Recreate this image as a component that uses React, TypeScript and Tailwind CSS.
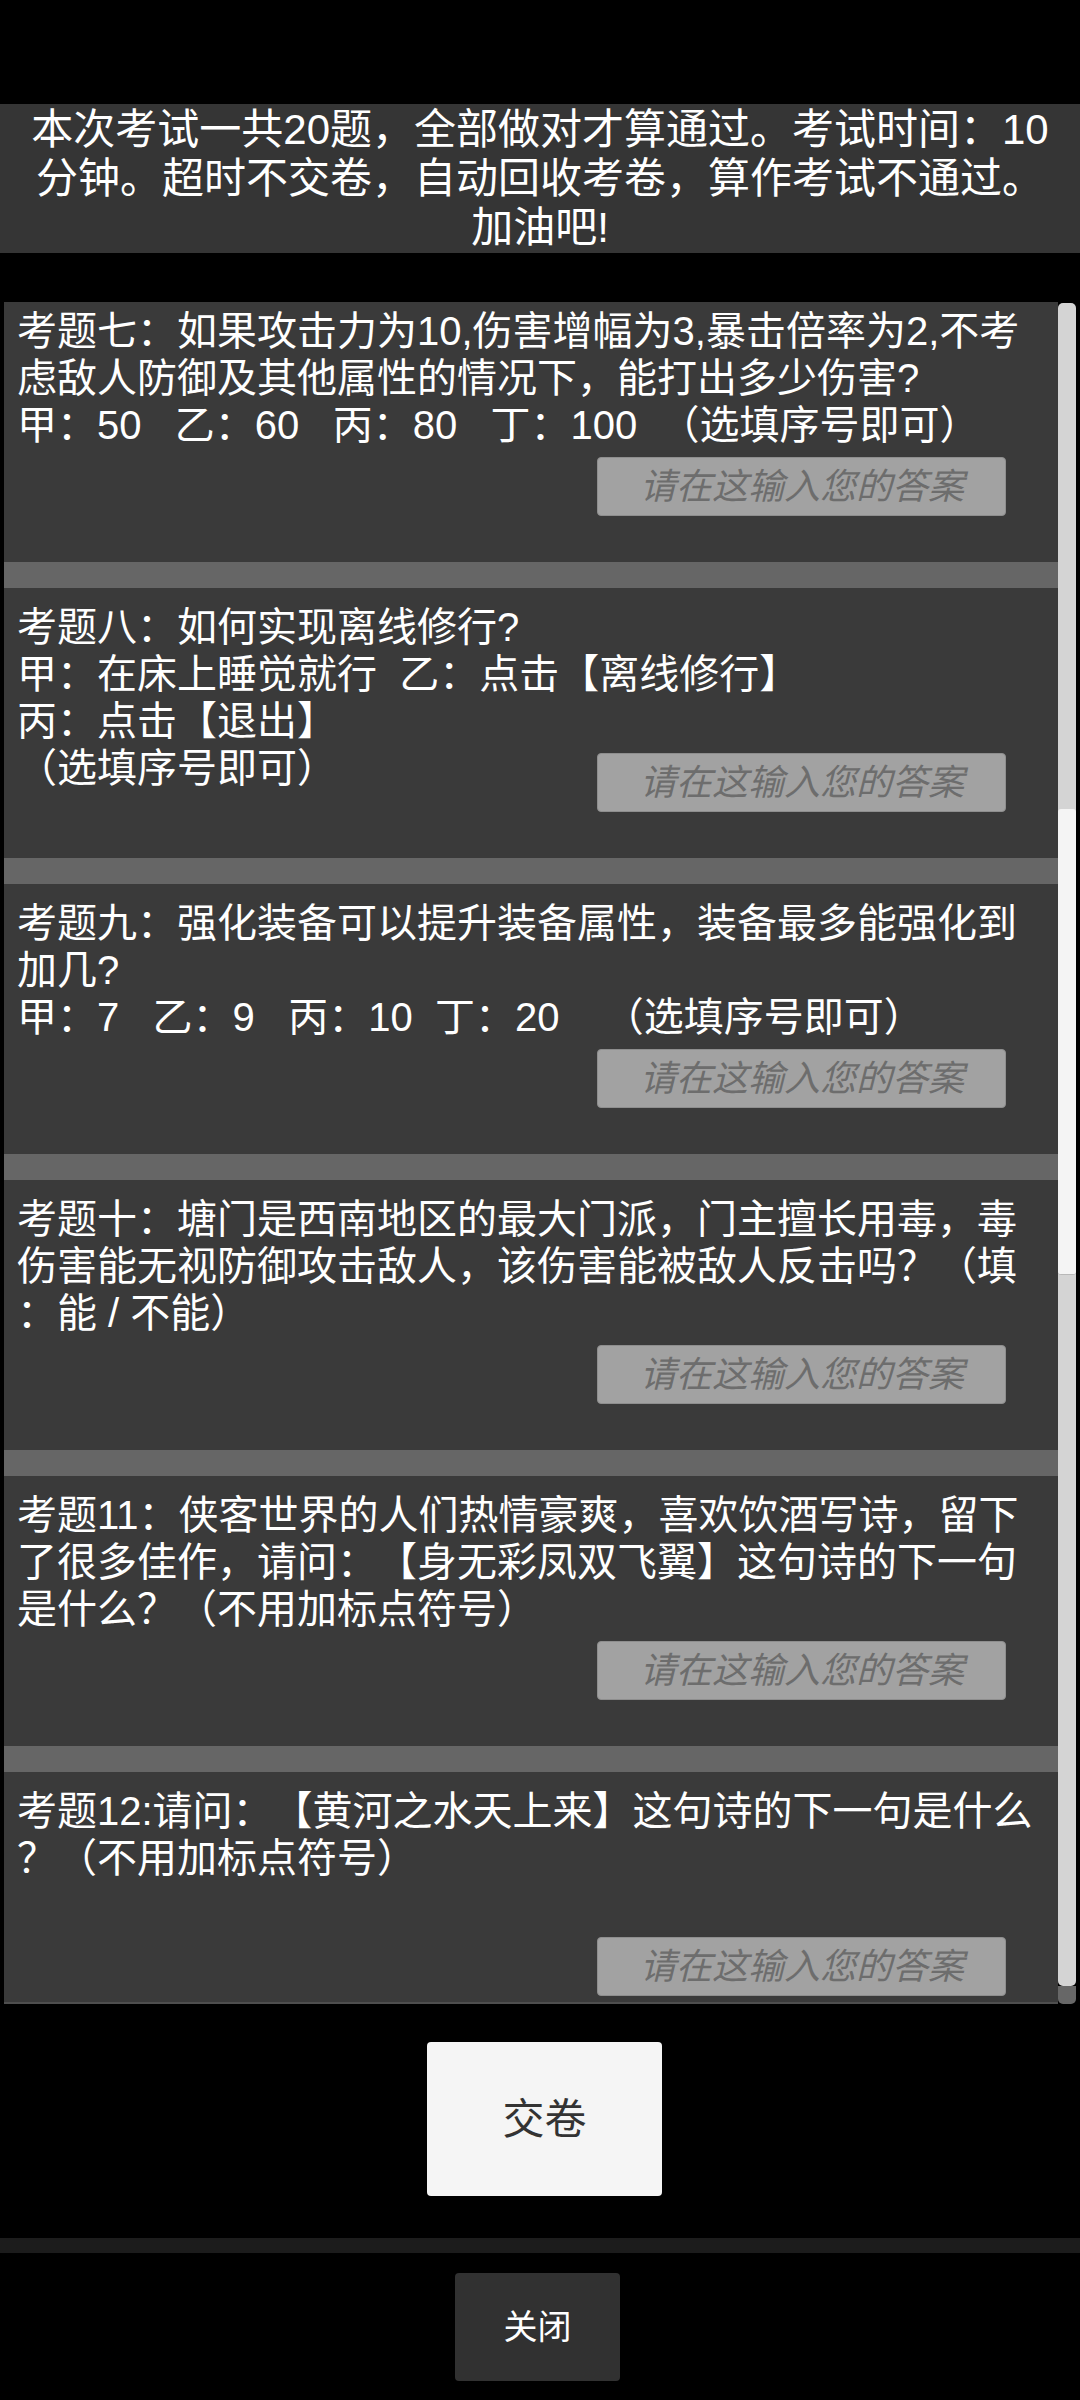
const questions: string[][] = [
  [
    "考题七：如果攻击力为10,伤害增幅为3,暴击倍率为2,不考",
    "虑敌人防御及其他属性的情况下，能打出多少伤害?",
    "甲：50   乙：60   丙：80   丁：100  （选填序号即可）",
  ],
  [
    "考题八：如何实现离线修行?",
    "甲：在床上睡觉就行  乙：点击【离线修行】",
    "丙：点击【退出】",
    "（选填序号即可）",
  ],
  [
    "考题九：强化装备可以提升装备属性，装备最多能强化到",
    "加几?",
    "甲：7   乙：9   丙：10  丁：20    （选填序号即可）",
  ],
  [
    "考题十：塘门是西南地区的最大门派，门主擅长用毒，毒",
    "伤害能无视防御攻击敌人，该伤害能被敌人反击吗？（填",
    "：能 / 不能）",
  ],
  [
    "考题11：侠客世界的人们热情豪爽，喜欢饮酒写诗，留下",
    "了很多佳作，请问：【身无彩凤双飞翼】这句诗的下一句",
    "是什么？（不用加标点符号）",
  ],
  [
    "考题12:请问：【黄河之水天上来】这句诗的下一句是什么",
    "？（不用加标点符号）",
  ],
];

function Question({ lines }: { lines: string[] }) {
  return (
    <div className="grid h-[270px] shrink-0 bg-[#3a3a3a]">
      <div className="[grid-area:1/1] self-start pt-[16px] pl-[13px] text-white text-[40px]">
        {lines.map((l, i) => (
          <div key={i} className="h-[47px] leading-[47px] whitespace-pre">
            {l}
          </div>
        ))}
      </div>
      <input
        readOnly
        placeholder="请在这输入您的答案"
        className="[grid-area:1/1] self-start justify-self-end mt-[165px] mr-[52px] w-[409px] h-[59px] rounded-[4px] border border-[#8e8e8e] bg-[#a2a2a2] pl-[42px] text-[36px] outline-none placeholder:italic placeholder:text-[#6d6d6d]"
      />
    </div>
  );
}

export default function App() {
  return (
    <div className="w-[1080px] h-[2400px] bg-black flex flex-col font-['Liberation_Sans','Noto_Sans_CJK_SC',sans-serif] [text-spacing-trim:space-all]">
      <div className="h-[104px] shrink-0" />

      <div className="h-[149px] shrink-0 bg-[#353535] pt-[1px] text-center text-white text-[42px]">
        <div className="h-[49px] leading-[49px] whitespace-nowrap">本次考试一共20题，全部做对才算通过。考试时间：10</div>
        <div className="h-[49px] leading-[49px] whitespace-nowrap">分钟。超时不交卷，自动回收考卷，算作考试不通过。</div>
        <div className="h-[49px] leading-[49px] whitespace-nowrap">加油吧!</div>
      </div>

      <div className="h-[49px] shrink-0" />

      <div className="h-[1702px] shrink-0 ml-[4px] mr-[4px] flex">
        <div className="flex-1 overflow-hidden bg-[#3a3a3a] border-b-2 border-[#4e4e4e]">
          <div className="-mt-[10px] flex flex-col">
            {questions.map((q, i) => (
              <div key={i} className="flex flex-col">
                {i > 0 && <div className="h-[26px] bg-[#666666]" />}
                <Question lines={q} />
              </div>
            ))}
          </div>
        </div>
        <div className="w-[18px] flex flex-col">
          <div className="flex-1 mt-[1px] rounded-[5px] bg-[#d4d4d4] flex flex-col">
            <div className="mt-[506px] h-[466px] rounded-[3px] bg-[#f4f4f4] border-b border-[#b8b8b8]" />
          </div>
          <div className="h-[18px] rounded-b-[5px] bg-[#676767]" />
        </div>
      </div>

      <div className="h-[38px] shrink-0" />

      <div className="h-[154px] shrink-0 flex justify-center pl-[9px]">
        <button className="w-[235px] h-[154px] rounded-[4px] bg-[#f5f5f5] text-[42px] text-[#333333]">
          交卷
        </button>
      </div>

      <div className="h-[42px] shrink-0" />
      <div className="h-[15px] shrink-0 bg-[#1c1c1c]" />
      <div className="h-[20px] shrink-0" />

      <div className="h-[108px] shrink-0 flex justify-center pr-[5px]">
        <button className="w-[165px] h-[108px] rounded-[4px] bg-[#313131] text-[34px] text-white">
          关闭
        </button>
      </div>

      <div className="flex-1" />
    </div>
  );
}
